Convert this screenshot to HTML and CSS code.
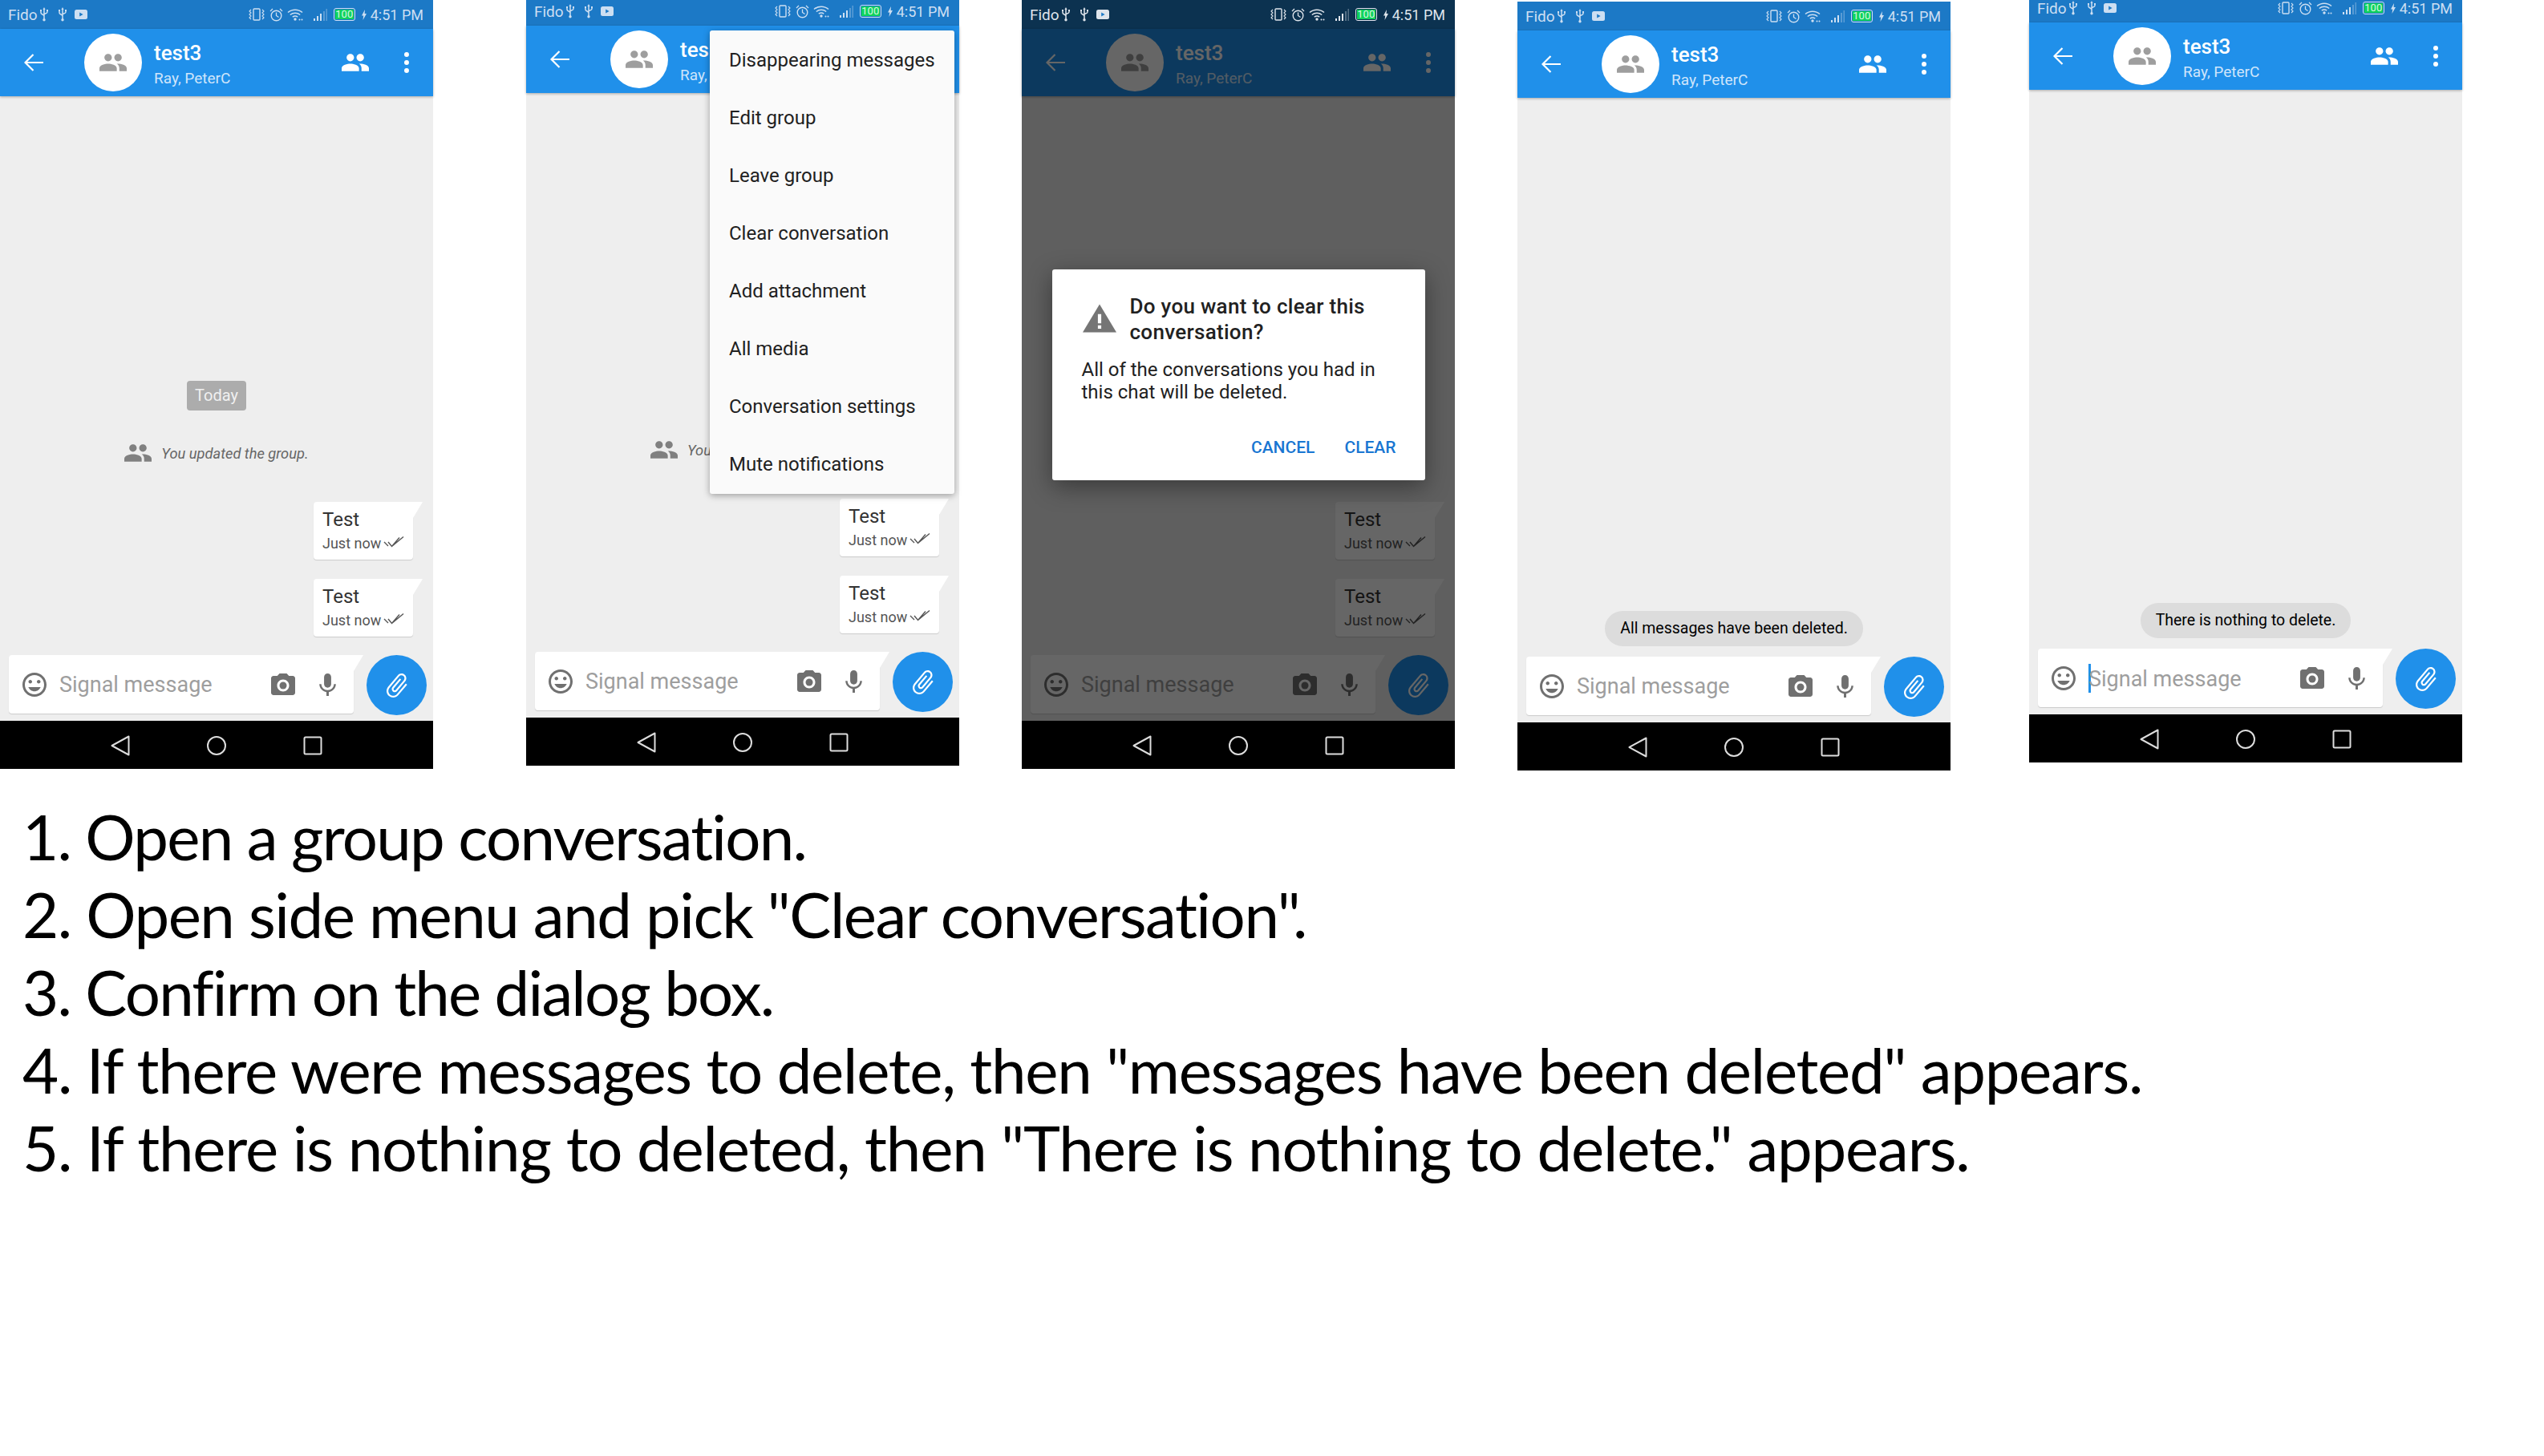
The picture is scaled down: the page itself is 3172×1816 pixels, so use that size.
FILE: index.html
```html
<!DOCTYPE html>
<html>
<head>
  <title>Clear conversation steps</title>
  <link rel="stylesheet" href="styles.css">
</head>
<body>
  <svg class="sprite" xmlns="http://www.w3.org/2000/svg">
    <symbol id="i-usb" viewBox="0 0 10 18"><path d="M5 3v12M1 4v3c0 2 4 2 4 4M9 4v2c0 2-4 2-4 3" fill="none" stroke="currentColor" stroke-width="1.500"/><path d="M5 0l1.600 3H3.400zM0 3h2v2H0zM8 3h2v2H8z" fill="currentColor"/><circle cx="5" cy="15.800" r="1.700" fill="currentColor"/></symbol>
    <symbol id="i-yt" viewBox="0 0 16 12"><rect width="16" height="12" rx="2.500" fill="currentColor"/><path d="M6.200 3.400v5.200L10.600 6z" fill="#1c79c6"/></symbol>
    <symbol id="i-vib" viewBox="0 0 20 16"><rect x="6" y="1" width="8" height="14" rx="1" fill="none" stroke="currentColor" stroke-width="1.400"/><path d="M3 2l-2 2 2 2-2 2 2 2-2 2 2 2M17 2l2 2-2 2 2 2-2 2 2 2-2 2" fill="none" stroke="currentColor" stroke-width="1.100"/></symbol>
    <symbol id="i-alarm" viewBox="0 0 17 17"><circle cx="8.500" cy="9.500" r="6.300" fill="none" stroke="currentColor" stroke-width="1.400"/><path d="M8.500 5.500v4l3 2M1 4l3-3M16 4l-3-3" fill="none" stroke="currentColor" stroke-width="1.300"/></symbol>
    <symbol id="i-wifi" viewBox="0 0 20 16"><path d="M1 5.500c5-4.500 13-4.500 18 0M3.800 8.500c3.500-3 9-3 12.400 0M6.800 11.200c2-1.500 4.500-1.500 6.400 0" fill="none" stroke="currentColor" stroke-width="1.500"/><circle cx="10" cy="14" r="1.700" fill="currentColor"/><circle cx="15.500" cy="14.500" r="1" fill="currentColor"/><circle cx="18.500" cy="14.500" r="1" fill="currentColor"/></symbol>
    <symbol id="i-signal" viewBox="0 0 17 17"><path d="M0 13h2v3H0zM4 10h2v6H4zM8 7h2v9H8z" fill="currentColor"/><path d="M12 4h2v12h-2zM15.500 1h1.500v15h-1.500z" fill="currentColor" opacity=".35"/></symbol>
    <symbol id="i-bolt" viewBox="0 0 6 13"><path d="M4 0L0 7.500h2.200L1.500 13 6 5H3.600z" fill="currentColor"/></symbol>
    <symbol id="i-people" viewBox="1 5 22 14"><path d="M16 11c1.660 0 2.990-1.340 2.990-3S17.660 5 16 5c-1.660 0-3 1.340-3 3s1.340 3 3 3zm-8 0c1.660 0 2.990-1.340 2.990-3S9.660 5 8 5C6.340 5 5 6.340 5 8s1.340 3 3 3zm0 2c-2.330 0-7 1.170-7 3.500V19h14v-2.500c0-2.330-4.670-3.500-7-3.500zm8 0c-.290 0-.620.020-.970.050 1.160.840 1.970 1.970 1.970 3.450V19h6v-2.500c0-2.330-4.670-3.500-7-3.500z" fill="currentColor"/></symbol>
    <symbol id="i-back" viewBox="0 0 24 24"><path d="M24 12H2M11.500 2L1.500 12l10 10" fill="none" stroke="currentColor" stroke-width="2.200"/></symbol>
    <symbol id="i-more" viewBox="0 0 6 26"><circle cx="3" cy="3" r="3" fill="currentColor"/><circle cx="3" cy="13" r="3" fill="currentColor"/><circle cx="3" cy="23" r="3" fill="currentColor"/></symbol>
    <symbol id="i-checks" viewBox="0 0 26 16"><path d="M1 8l5 5M6 8l4.500 5.500L20 2.500M10.500 13.500L25 1.500" fill="none" stroke="currentColor" stroke-width="1.400"/></symbol>
    <symbol id="i-emoji" viewBox="2 2 20 20"><path d="M11.990 2C6.470 2 2 6.480 2 12s4.470 10 9.990 10C17.520 22 22 17.520 22 12S17.520 2 11.990 2zM12 20c-4.420 0-8-3.580-8-8s3.580-8 8-8 8 3.580 8 8-3.580 8-8 8zm3.500-9c.830 0 1.500-.670 1.500-1.500S16.330 8 15.500 8 14 8.670 14 9.500s.670 1.500 1.500 1.500zm-7 0c.830 0 1.500-.670 1.500-1.500S9.330 8 8.500 8 7 8.670 7 9.500 7.670 11 8.500 11zm3.500 6.500c2.330 0 4.310-1.460 5.110-3.500H6.890c.800 2.040 2.780 3.500 5.110 3.500z" fill="currentColor"/></symbol>
    <symbol id="i-camera" viewBox="2 2 20 18"><path d="M9 2L7.170 4H4c-1.100 0-2 .900-2 2v12c0 1.100.900 2 2 2h16c1.100 0 2-.900 2-2V6c0-1.100-.900-2-2-2h-3.170L15 2H9zm3 15c-2.760 0-5-2.240-5-5s2.240-5 5-5 5 2.240 5 5-2.240 5-5 5z" fill="currentColor"/><circle cx="12" cy="12" r="3" fill="currentColor"/></symbol>
    <symbol id="i-mic" viewBox="5 2 14 19"><path d="M12 14c1.660 0 2.990-1.340 2.990-3L15 5c0-1.660-1.340-3-3-3S9 3.340 9 5v6c0 1.660 1.340 3 3 3zm5.300-3c0 3-2.540 5.100-5.300 5.100S6.700 14 6.700 11H5c0 3.410 2.720 6.230 6 6.720V21h2v-3.280c3.280-.480 6-3.300 6-6.720h-1.700z" fill="currentColor"/></symbol>
    <symbol id="i-clip" viewBox="0 0 24 24"><path transform="rotate(40 12 12)" d="M16.500 6v11.500c0 2.210-1.790 4-4 4s-4-1.790-4-4V5c0-1.380 1.120-2.500 2.500-2.500s2.500 1.120 2.500 2.500v10.500c0 .550-.450 1-1 1s-1-.450-1-1V6H10v9.500c0 1.380 1.120 2.500 2.500 2.500s2.500-1.120 2.500-2.500V5c0-2.210-1.790-4-4-4S7 2.790 7 5v12.500c0 3.040 2.460 5.500 5.500 5.500s5.500-2.460 5.500-5.500V6h-1.500z" fill="currentColor"/></symbol>
    <symbol id="i-warn" viewBox="0 0 24 20"><path d="M12 0L24 20H0z" fill="currentColor"/><path d="M10.800 7h2.400v6.500h-2.400zM10.800 15h2.400v2.400h-2.400z" fill="#fff"/></symbol>
    <symbol id="i-nav-back" viewBox="0 0 24 26"><path d="M22.500 1.500v23L1.500 13z" fill="none" stroke="currentColor" stroke-width="2" stroke-linejoin="round"/></symbol>
    <symbol id="i-nav-home" viewBox="0 0 24 24"><circle cx="12" cy="12" r="11" fill="none" stroke="currentColor" stroke-width="2"/></symbol>
    <symbol id="i-nav-recent" viewBox="0 0 24 24"><rect x="1.500" y="1.500" width="21" height="21" rx="1.500" fill="none" stroke="currentColor" stroke-width="2"/></symbol>
  </svg>

  <div class="shots">

    <!-- 1. conversation -->
    <div class="phone">
      <div class="status">
        <span class="carrier">Fido</span>
        <svg class="ic-usb first"><use href="#i-usb"/></svg><svg class="ic-usb"><use href="#i-usb"/></svg><svg class="ic-yt"><use href="#i-yt"/></svg>
        <svg class="ic-vib"><use href="#i-vib"/></svg><svg class="ic-alarm"><use href="#i-alarm"/></svg><svg class="ic-wifi"><use href="#i-wifi"/></svg><svg class="ic-signal"><use href="#i-signal"/></svg>
        <span class="battery"><span class="level">100</span></span><svg class="ic-bolt"><use href="#i-bolt"/></svg>
        <span class="clock">4:51 PM</span>
      </div>
      <div class="toolbar">
        <svg class="ic-back"><use href="#i-back"/></svg>
        <div class="avatar"><svg class="ic-avatar"><use href="#i-people"/></svg></div>
        <div class="title"><div class="name">test3</div><div class="members">Ray, PeterC</div></div>
        <svg class="ic-people"><use href="#i-people"/></svg>
        <svg class="ic-more"><use href="#i-more"/></svg>
      </div>
      <div class="chat">
        <div class="date">Today</div>
        <div class="update"><svg class="ic-update"><use href="#i-people"/></svg><span>You updated the group.</span></div>
        <div class="bubble"><div class="msg">Test</div><div class="meta">Just now<svg class="ic-checks"><use href="#i-checks"/></svg></div></div>
        <div class="bubble"><div class="msg">Test</div><div class="meta">Just now<svg class="ic-checks"><use href="#i-checks"/></svg></div></div>
      </div>
      <div class="composer">
        <div class="input">
          <svg class="ic-emoji"><use href="#i-emoji"/></svg>
          <span class="hint">Signal message</span>
          <svg class="ic-camera"><use href="#i-camera"/></svg>
          <svg class="ic-mic"><use href="#i-mic"/></svg>
        </div>
        <div class="fab"><svg class="ic-clip"><use href="#i-clip"/></svg></div>
      </div>
      <div class="nav">
        <svg class="ic-nav"><use href="#i-nav-back"/></svg><svg class="ic-nav"><use href="#i-nav-home"/></svg><svg class="ic-nav"><use href="#i-nav-recent"/></svg>
      </div>
    </div>

    <!-- 2. overflow menu, covers the date and most of the update line -->
    <div class="phone phone-menu">
      <div class="status">
        <span class="carrier">Fido</span>
        <svg class="ic-usb first"><use href="#i-usb"/></svg><svg class="ic-usb"><use href="#i-usb"/></svg><svg class="ic-yt"><use href="#i-yt"/></svg>
        <svg class="ic-vib"><use href="#i-vib"/></svg><svg class="ic-alarm"><use href="#i-alarm"/></svg><svg class="ic-wifi"><use href="#i-wifi"/></svg><svg class="ic-signal"><use href="#i-signal"/></svg>
        <span class="battery"><span class="level">100</span></span><svg class="ic-bolt"><use href="#i-bolt"/></svg>
        <span class="clock">4:51 PM</span>
      </div>
      <div class="toolbar">
        <svg class="ic-back"><use href="#i-back"/></svg>
        <div class="avatar"><svg class="ic-avatar"><use href="#i-people"/></svg></div>
        <div class="title"><div class="name">tes</div><div class="members">Ray,</div></div>
        <svg class="ic-people"><use href="#i-people"/></svg>
        <svg class="ic-more"><use href="#i-more"/></svg>
      </div>
      <div class="chat">
        <div class="date"></div>
        <div class="update"><svg class="ic-update"><use href="#i-people"/></svg><span class="update-cut">You</span></div>
        <div class="bubble"><div class="msg">Test</div><div class="meta">Just now<svg class="ic-checks"><use href="#i-checks"/></svg></div></div>
        <div class="bubble"><div class="msg">Test</div><div class="meta">Just now<svg class="ic-checks"><use href="#i-checks"/></svg></div></div>
      </div>
      <div class="composer">
        <div class="input">
          <svg class="ic-emoji"><use href="#i-emoji"/></svg>
          <span class="hint">Signal message</span>
          <svg class="ic-camera"><use href="#i-camera"/></svg>
          <svg class="ic-mic"><use href="#i-mic"/></svg>
        </div>
        <div class="fab"><svg class="ic-clip"><use href="#i-clip"/></svg></div>
      </div>
      <div class="nav">
        <svg class="ic-nav"><use href="#i-nav-back"/></svg><svg class="ic-nav"><use href="#i-nav-home"/></svg><svg class="ic-nav"><use href="#i-nav-recent"/></svg>
      </div>
      <ul class="menu">
        <li>Disappearing messages</li>
        <li>Edit group</li>
        <li>Leave group</li>
        <li>Clear conversation</li>
        <li>Add attachment</li>
        <li>All media</li>
        <li>Conversation settings</li>
        <li>Mute notifications</li>
      </ul>
    </div>

    <!-- 3. confirm dialog -->
    <div class="phone phone-dialog">
      <div class="status">
        <span class="carrier">Fido</span>
        <svg class="ic-usb first"><use href="#i-usb"/></svg><svg class="ic-usb"><use href="#i-usb"/></svg><svg class="ic-yt"><use href="#i-yt"/></svg>
        <svg class="ic-vib"><use href="#i-vib"/></svg><svg class="ic-alarm"><use href="#i-alarm"/></svg><svg class="ic-wifi"><use href="#i-wifi"/></svg><svg class="ic-signal"><use href="#i-signal"/></svg>
        <span class="battery"><span class="level">100</span></span><svg class="ic-bolt"><use href="#i-bolt"/></svg>
        <span class="clock">4:51 PM</span>
      </div>
      <div class="toolbar">
        <svg class="ic-back"><use href="#i-back"/></svg>
        <div class="avatar"><svg class="ic-avatar"><use href="#i-people"/></svg></div>
        <div class="title"><div class="name">test3</div><div class="members">Ray, PeterC</div></div>
        <svg class="ic-people"><use href="#i-people"/></svg>
        <svg class="ic-more"><use href="#i-more"/></svg>
      </div>
      <div class="chat">
        <div class="bubble"><div class="msg">Test</div><div class="meta">Just now<svg class="ic-checks"><use href="#i-checks"/></svg></div></div>
        <div class="bubble"><div class="msg">Test</div><div class="meta">Just now<svg class="ic-checks"><use href="#i-checks"/></svg></div></div>
      </div>
      <div class="composer">
        <div class="input">
          <svg class="ic-emoji"><use href="#i-emoji"/></svg>
          <span class="hint">Signal message</span>
          <svg class="ic-camera"><use href="#i-camera"/></svg>
          <svg class="ic-mic"><use href="#i-mic"/></svg>
        </div>
        <div class="fab"><svg class="ic-clip"><use href="#i-clip"/></svg></div>
      </div>
      <div class="nav">
        <svg class="ic-nav"><use href="#i-nav-back"/></svg><svg class="ic-nav"><use href="#i-nav-home"/></svg><svg class="ic-nav"><use href="#i-nav-recent"/></svg>
      </div>
      <div class="scrim">
        <div class="dialog">
          <div class="dialog-head">
            <svg class="ic-warn"><use href="#i-warn"/></svg>
            <div class="dialog-title">Do you want to clear this conversation?</div>
          </div>
          <p class="dialog-body">All of the conversations you had in this chat will be deleted.</p>
          <div class="dialog-actions"><span>CANCEL</span><span>CLEAR</span></div>
        </div>
      </div>
    </div>

    <!-- 4. messages deleted -->
    <div class="phone phone-deleted">
      <div class="status">
        <span class="carrier">Fido</span>
        <svg class="ic-usb first"><use href="#i-usb"/></svg><svg class="ic-usb"><use href="#i-usb"/></svg><svg class="ic-yt"><use href="#i-yt"/></svg>
        <svg class="ic-vib"><use href="#i-vib"/></svg><svg class="ic-alarm"><use href="#i-alarm"/></svg><svg class="ic-wifi"><use href="#i-wifi"/></svg><svg class="ic-signal"><use href="#i-signal"/></svg>
        <span class="battery"><span class="level">100</span></span><svg class="ic-bolt"><use href="#i-bolt"/></svg>
        <span class="clock">4:51 PM</span>
      </div>
      <div class="toolbar">
        <svg class="ic-back"><use href="#i-back"/></svg>
        <div class="avatar"><svg class="ic-avatar"><use href="#i-people"/></svg></div>
        <div class="title"><div class="name">test3</div><div class="members">Ray, PeterC</div></div>
        <svg class="ic-people"><use href="#i-people"/></svg>
        <svg class="ic-more"><use href="#i-more"/></svg>
      </div>
      <div class="chat">
        <div class="toast">All messages have been deleted.</div>
      </div>
      <div class="composer">
        <div class="input">
          <svg class="ic-emoji"><use href="#i-emoji"/></svg>
          <span class="hint">Signal message</span>
          <svg class="ic-camera"><use href="#i-camera"/></svg>
          <svg class="ic-mic"><use href="#i-mic"/></svg>
        </div>
        <div class="fab"><svg class="ic-clip"><use href="#i-clip"/></svg></div>
      </div>
      <div class="nav">
        <svg class="ic-nav"><use href="#i-nav-back"/></svg><svg class="ic-nav"><use href="#i-nav-home"/></svg><svg class="ic-nav"><use href="#i-nav-recent"/></svg>
      </div>
    </div>

    <!-- 5. nothing to delete -->
    <div class="phone phone-empty">
      <div class="status">
        <span class="carrier">Fido</span>
        <svg class="ic-usb first"><use href="#i-usb"/></svg><svg class="ic-usb"><use href="#i-usb"/></svg><svg class="ic-yt"><use href="#i-yt"/></svg>
        <svg class="ic-vib"><use href="#i-vib"/></svg><svg class="ic-alarm"><use href="#i-alarm"/></svg><svg class="ic-wifi"><use href="#i-wifi"/></svg><svg class="ic-signal"><use href="#i-signal"/></svg>
        <span class="battery"><span class="level">100</span></span><svg class="ic-bolt"><use href="#i-bolt"/></svg>
        <span class="clock">4:51 PM</span>
      </div>
      <div class="toolbar">
        <svg class="ic-back"><use href="#i-back"/></svg>
        <div class="avatar"><svg class="ic-avatar"><use href="#i-people"/></svg></div>
        <div class="title"><div class="name">test3</div><div class="members">Ray, PeterC</div></div>
        <svg class="ic-people"><use href="#i-people"/></svg>
        <svg class="ic-more"><use href="#i-more"/></svg>
      </div>
      <div class="chat">
        <div class="toast">There is nothing to delete.</div>
      </div>
      <div class="composer">
        <div class="input">
          <svg class="ic-emoji"><use href="#i-emoji"/></svg>
          <span class="hint focused">Signal message</span>
          <svg class="ic-camera"><use href="#i-camera"/></svg>
          <svg class="ic-mic"><use href="#i-mic"/></svg>
        </div>
        <div class="fab"><svg class="ic-clip"><use href="#i-clip"/></svg></div>
      </div>
      <div class="nav">
        <svg class="ic-nav"><use href="#i-nav-back"/></svg><svg class="ic-nav"><use href="#i-nav-home"/></svg><svg class="ic-nav"><use href="#i-nav-recent"/></svg>
      </div>
    </div>

  </div>

  <ol class="steps">
    <li class="step-1">1. Open a group conversation.</li>
    <li class="step-2">2. Open side menu and pick "Clear conversation".</li>
    <li class="step-3">3. Confirm on the dialog box.</li>
    <li class="step-4">4. If there were messages to delete, then "messages have been deleted" appears.</li>
    <li class="step-5">5. If there is nothing to deleted, then "There is nothing to delete." appears.</li>
  </ol>
</body>
</html>
```

FILE: styles.css
```css
body {
  margin: 0;
  height: 1816px;
  overflow: hidden;
  background: #fff;
  font-family: Roboto, sans-serif;
}

.sprite {
  display: none;
}

svg {
  flex: none;
  display: block;
}

.shots {
  display: flex;
  align-items: flex-start;
  height: 961px;
}

/* each screenshot was pasted at a slightly different height */
.phone {
  position: relative;
  flex: none;
  display: flex;
  flex-direction: column;
  width: 540px;
  height: 959px;
  background: #eee;
}

.phone-menu {
  margin: -4px 0 0 116px;
}

.phone-dialog {
  margin-left: 78px;
}

.phone-deleted {
  margin: 2px 0 0 78px;
}

.phone-empty {
  margin: -8px 0 0 98px;
}

/* status bar */
.status {
  flex: none;
  display: flex;
  align-items: center;
  height: 36px;
  padding: 0 12px 0 10px;
  background: #1c79c6;
  color: #cddff2;
  font-size: 19px;
}

.phone-dialog .status {
  background: #0c3250;
  color: #dfe5ec;
}

.carrier {
  width: 36px;
}

.ic-usb {
  width: 10px;
  height: 18px;
  margin-left: 13px;
}

.ic-usb.first {
  margin-left: 4px;
}

.ic-yt {
  width: 16px;
  height: 12px;
  margin-left: 10px;
}

.ic-vib {
  width: 20px;
  height: 16px;
  margin-left: auto;
}

.ic-alarm {
  width: 17px;
  height: 17px;
  margin-left: 6px;
}

.ic-wifi {
  width: 20px;
  height: 16px;
  margin-left: 5px;
}

.ic-signal {
  width: 17px;
  height: 17px;
  margin-left: 13px;
}

.battery {
  box-sizing: border-box;
  display: flex;
  width: 27px;
  height: 16px;
  margin: 0 3px 0 8px;
  padding: 1px;
  border: 1px solid currentColor;
  border-radius: 3px;
}

.level {
  flex: 1;
  background: #10d35c;
  color: #d8f7e2;
  font-size: 13px;
  line-height: 12px;
  text-align: center;
}

.ic-bolt {
  width: 6px;
  height: 13px;
  margin-left: 5px;
}

.clock {
  margin-left: 5px;
  font-size: 18px;
}

/* toolbar */
.toolbar {
  flex: none;
  position: relative;
  display: flex;
  align-items: center;
  height: 84px;
  background: #2090ea;
  box-shadow: 0 1px 3px rgba(0, 0, 0, 0.3);
  color: #fff;
}

.ic-back {
  width: 24px;
  height: 24px;
  margin-left: 30px;
}

.avatar {
  display: flex;
  align-items: center;
  justify-content: center;
  width: 72px;
  height: 72px;
  margin-left: 51px;
  border-radius: 50%;
  background: #fff;
  color: #9e9e9e;
}

.ic-avatar {
  width: 34px;
  height: 22px;
}

.title {
  margin: 3px 0 0 15px;
}

.name {
  font-size: 26px;
  font-weight: 500;
  line-height: 32px;
}

.members {
  margin-top: 5px;
  color: #cfe5fb;
  font-size: 19px;
  line-height: 22px;
}

.ic-people {
  width: 34px;
  height: 22px;
  margin-left: auto;
}

.ic-more {
  width: 6px;
  height: 26px;
  margin: 0 30px 0 44px;
}

/* messages */
.chat {
  flex: 1;
  display: flex;
  flex-direction: column;
  justify-content: flex-end;
  align-items: center;
  padding-bottom: 23px;
}

.date {
  margin-bottom: 41px;
  padding: 0 10px;
  border-radius: 4px;
  background: #acacac;
  color: #f0f0f0;
  font-size: 20px;
  line-height: 37px;
}

.date:empty {
  height: 37px;
}

.update {
  display: flex;
  align-items: center;
  height: 24px;
  margin-bottom: 49px;
  color: #666;
  font-size: 18.300px;
  font-style: italic;
}

/* only "You" shows beside the menu in shot 2, keep the row's width */
.update-cut {
  width: 184px;
}

.ic-update {
  width: 34px;
  height: 22px;
  margin-right: 12px;
  color: #808080;
}

.bubble {
  position: relative;
  box-sizing: border-box;
  align-self: flex-end;
  width: 124px;
  height: 72px;
  margin-right: 25px;
  padding: 8px 0 0 11px;
  border-radius: 4px 0 4px 4px;
  background: #fff;
  box-shadow: 0 1px 1px rgba(0, 0, 0, 0.15);
  color: #333;
}

.bubble + .bubble {
  margin-top: 24px;
}

.bubble::after {
  content: "";
  position: absolute;
  top: 0;
  left: 100%;
  border-top: 20px solid #fff;
  border-right: 12px solid transparent;
}

.msg {
  font-size: 24px;
  line-height: 28px;
}

.meta {
  display: flex;
  align-items: center;
  margin-top: 4px;
  color: #555;
  font-size: 18px;
  line-height: 24px;
}

.ic-checks {
  width: 26px;
  height: 16px;
  margin: -4px 0 0 3px;
}

.toast {
  margin-bottom: -10px;
  padding: 0 19px;
  border-radius: 22px;
  background: #dcdcdc;
  color: #000;
  font-size: 19.500px;
  line-height: 44px;
}

/* message box */
.composer {
  flex: none;
  display: flex;
  align-items: flex-start;
  gap: 16px;
  height: 75px;
  padding: 0 8px 7px 11px;
}

.input {
  position: relative;
  display: flex;
  align-items: center;
  width: 430px;
  height: 73px;
  border-radius: 4px 0 4px 4px;
  background: #fff;
  box-shadow: 0 1px 1px rgba(0, 0, 0, 0.15);
  color: #707070;
}

.input::after {
  content: "";
  position: absolute;
  top: 0;
  left: 100%;
  border-top: 20px solid #fff;
  border-right: 12px solid transparent;
}

.ic-emoji {
  width: 30px;
  height: 30px;
  margin-left: 17px;
}

.hint {
  margin-left: 16px;
  color: #9e9e9e;
  font-size: 27px;
}

.hint.focused::before {
  content: "";
  display: inline-block;
  width: 3px;
  height: 36px;
  margin: 0 -3px -8px 0;
  background: #2090ea;
}

.ic-camera {
  width: 30px;
  height: 27px;
  margin-left: auto;
}

.ic-mic {
  width: 21px;
  height: 28px;
  margin: 0 22px 0 30px;
}

.fab {
  display: flex;
  align-items: center;
  justify-content: center;
  width: 75px;
  height: 75px;
  border-radius: 50%;
  background: #2090ea;
  color: #fff;
}

.ic-clip {
  width: 36px;
  height: 36px;
}

/* android buttons */
.nav {
  flex: none;
  display: flex;
  align-items: center;
  justify-content: center;
  gap: 96px;
  box-sizing: border-box;
  height: 60px;
  padding-top: 2px;
  background: #000;
  color: #ddd;
}

.ic-nav {
  width: 24px;
  height: 26px;
}

/* overflow menu */
.menu {
  position: absolute;
  top: 42px;
  right: 6px;
  width: 305px;
  margin: 0;
  padding: 1px 0 1px;
  list-style: none;
  border-radius: 3px;
  background: #fafafa;
  box-shadow: 0 2px 8px rgba(0, 0, 0, 0.35);
  color: #212121;
  font-size: 24px;
  line-height: 72px;
}

.menu li {
  padding-left: 24px;
}

/* dialog */
.scrim {
  position: absolute;
  top: 36px;
  bottom: 60px;
  left: 0;
  right: 0;
  display: flex;
  align-items: center;
  justify-content: center;
  background: rgba(0, 0, 0, 0.6);
}

.dialog {
  box-sizing: border-box;
  width: 465px;
  height: 263px;
  padding: 30px 36px 0 37px;
  border-radius: 3px;
  background: #fff;
  box-shadow: 0 8px 30px rgba(0, 0, 0, 0.4);
  color: #212121;
}

.dialog-head {
  display: flex;
  align-items: center;
}

.ic-warn {
  width: 42px;
  height: 36px;
  margin: -2px 17px 0 1px;
  color: #757575;
}

.dialog-title {
  font-size: 26px;
  font-weight: 500;
  letter-spacing: 0.3px;
  line-height: 32px;
}

.dialog-body {
  margin: 17px 0 0;
  font-size: 24px;
  line-height: 28px;
}

.dialog-actions {
  display: flex;
  justify-content: flex-end;
  gap: 37px;
  margin-top: 43px;
  color: #1976d2;
  font-size: 21px;
  font-weight: 500;
  line-height: 24px;
}

/* caption, Lato stands in for the original's narrower face */
.steps {
  margin: 34px 0 0 28px;
  padding: 0;
  list-style: none;
  color: #000;
  font-family: Lato, sans-serif;
  font-size: 78px;
  line-height: 97px;
}

.step-1 {
  letter-spacing: -1.750px;
}

.step-2 {
  letter-spacing: -1.470px;
}

.step-3 {
  letter-spacing: -1.800px;
}

.step-4 {
  letter-spacing: -1.270px;
}

.step-5 {
  letter-spacing: -1.170px;
}
```
